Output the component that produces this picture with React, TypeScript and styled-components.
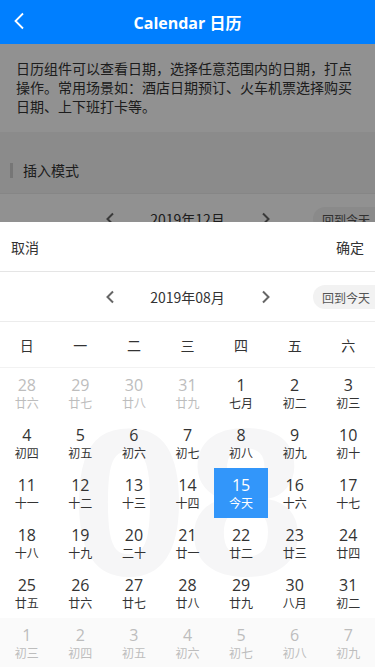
import React from "react";
import styled, { createGlobalStyle } from "styled-components";

const Global = createGlobalStyle`
  html, body { margin: 0; padding: 0; }
  body {
    font-family: "Open Sans", "Noto Sans CJK SC", sans-serif;
    background: #ffffff;
    color: #333;
    -webkit-font-smoothing: antialiased;
  }
  * { box-sizing: border-box; }
`;

const Page = styled.div`
  width: 375px;
  height: 667px;
  overflow: hidden;
  background: #fff;
`;

const NavBar = styled.header`
  height: 44px;
  background: #007fff;
  display: flex;
  align-items: center;
  justify-content: center;
  position: relative;
  z-index: 2;
`;

const BackBtn = styled.div`
  position: absolute;
  left: 13px;
  top: 12px;
  width: 12px;
  height: 18px;
  display: flex;
`;

const NavTitle = styled.h1`
  margin: 0;
  font-size: 16px;
  font-weight: 700;
  color: #fff;
  font-family: "Open Sans", "Noto Sans CJK SC", sans-serif;
`;

const Desc = styled.p`
  margin: 0;
  padding: 15px 16px 16px;
  font-size: 14px;
  line-height: 19px;
  color: #333;
  font-family: "Noto Sans CJK SC", sans-serif;
`;

const Section = styled.div`
  background: #f5f5f5;
  padding: 28px 10px 13px;
  border-bottom: 1px solid #ececec;
`;

const SectionTitle = styled.div`
  display: flex;
  align-items: center;
  gap: 10px;
  font-size: 14px;
  line-height: 20px;
  color: #333;
  font-family: "Noto Sans CJK SC", sans-serif;
  &::before {
    content: "";
    width: 3px;
    height: 15px;
    background: #cfcfcf;
  }
`;

const MonthBar = styled.div`
  height: 50px;
  display: flex;
  align-items: center;
  justify-content: center;
  gap: 33px;
  position: relative;
  border-bottom: 1px solid #ececec;
  background: #fff;
`;

const Chevron = styled.span`
  display: flex;
  width: 10px;
  height: 14px;
`;

const MonthTitle = styled.span`
  font-size: 14px;
  color: #333;
  width: 80px;
  text-align: center;
  font-family: "Noto Sans CJK SC", sans-serif;
`;

const TodayBtn = styled.span`
  position: absolute;
  right: 0;
  top: 13px;
  height: 24px;
  padding: 0 5px 0 9px;
  display: flex;
  align-items: center;
  background: #f2f2f2;
  border-radius: 12px 0 0 12px;
  font-size: 12px;
  color: #555;
  font-family: "Noto Sans CJK SC", sans-serif;
`;

const Mask = styled.div`
  position: fixed;
  left: 0;
  right: 0;
  top: 44px;
  bottom: 0;
  background: rgba(0, 0, 0, 0.43);
`;

const Popup = styled.div`
  position: fixed;
  left: 0;
  right: 0;
  bottom: 0;
  height: 445px;
  background: #fff;
  display: flex;
  flex-direction: column;
`;

const ActionBar = styled.div`
  height: 50px;
  padding: 0 11px;
  display: flex;
  align-items: center;
  justify-content: space-between;
  border-bottom: 1px solid #e5e5e5;
  font-size: 14px;
  color: #333;
  font-family: "Noto Sans CJK SC", sans-serif;
`;

const WeekRow = styled.div`
  height: 46px;
  display: grid;
  grid-template-columns: repeat(7, 1fr);
  align-items: center;
  border-bottom: 1px solid #f2f2f2;
  font-size: 14px;
  color: #333;
  text-align: center;
  font-family: "Noto Sans CJK SC", sans-serif;
`;

const Body = styled.div`
  position: relative;
  flex: 1;
  overflow: hidden;
`;

const Watermark = styled.div`
  position: absolute;
  left: 0;
  right: 0;
  top: 30px;
  text-align: center;
  font-family: "Liberation Sans", Arial, sans-serif;
  font-weight: 700;
  font-size: 210px;
  line-height: 210px;
  color: #f6f6f7;
  pointer-events: none;
`;

const Grid = styled.div`
  position: relative;
  display: grid;
  grid-template-columns: repeat(7, 1fr);
  grid-auto-rows: 50px;
`;

const Cell = styled.div<{ $muted?: boolean; $selected?: boolean; $shaded?: boolean }>`
  display: flex;
  flex-direction: column;
  align-items: center;
  justify-content: center;
  background: ${(p) => (p.$selected ? "#3296fa" : p.$shaded ? "#fafafa" : "transparent")};
  color: ${(p) => (p.$selected ? "#fff" : p.$muted ? "#bdbdbd" : "#333")};
`;

const DayNum = styled.span`
  display: block;
  height: 19px;
  font-size: 16px;
  line-height: 19px;
  font-family: "Open Sans", "Noto Sans CJK SC", sans-serif;
`;

const Lunar = styled.span`
  display: block;
  height: 16px;
  font-size: 12px;
  line-height: 16px;
  font-family: "Noto Sans CJK SC", sans-serif;
`;

const ChevronIcon = ({ dir }: { dir: "l" | "r" }) => (
  <svg width="10" height="14" viewBox="0 0 10 14">
    <polyline
      points={dir === "l" ? "8,1.5 2.5,7 8,12.5" : "2,1.5 7.5,7 2,12.5"}
      fill="none"
      stroke="#666"
      strokeWidth="2"
    />
  </svg>
);

type Day = { d: number; l: string; m?: boolean; s?: boolean };

const raw: [number, string][] = [
  [28, "廿六"], [29, "廿七"], [30, "廿八"], [31, "廿九"],
  [1, "七月"], [2, "初二"], [3, "初三"], [4, "初四"], [5, "初五"], [6, "初六"], [7, "初七"],
  [8, "初八"], [9, "初九"], [10, "初十"], [11, "十一"], [12, "十二"], [13, "十三"], [14, "十四"],
  [15, "今天"], [16, "十六"], [17, "十七"], [18, "十八"], [19, "十九"], [20, "二十"], [21, "廿一"],
  [22, "廿二"], [23, "廿三"], [24, "廿四"], [25, "廿五"], [26, "廿六"], [27, "廿七"], [28, "廿八"],
  [29, "廿九"], [30, "八月"], [31, "初二"],
  [1, "初三"], [2, "初四"], [3, "初五"], [4, "初六"], [5, "初七"], [6, "初八"], [7, "初九"],
];

const days: Day[] = raw.map(([d, l], i) => ({
  d,
  l,
  m: i < 4 || i >= 35,
  s: i === 18,
}));

const weeks = ["日", "一", "二", "三", "四", "五", "六"];

export default function App() {
  return (
    <Page>
      <Global />
      <NavBar>
        <BackBtn>
          <svg width="12" height="18" viewBox="0 0 12 18">
            <polyline points="10,1.5 2.5,9 10,16.5" fill="none" stroke="#fff" strokeWidth="1.8" />
          </svg>
        </BackBtn>
        <NavTitle>Calendar 日历</NavTitle>
      </NavBar>
      <Desc>
        日历组件可以查看日期，选择任意范围内的日期，打点操作。常用场景如：酒店日期预订、火车机票选择购买日期、上下班打卡等。
      </Desc>
      <Section>
        <SectionTitle>插入模式</SectionTitle>
      </Section>
      <MonthBar>
        <Chevron><ChevronIcon dir="l" /></Chevron>
        <MonthTitle>2019年12月</MonthTitle>
        <Chevron><ChevronIcon dir="r" /></Chevron>
        <TodayBtn>回到今天</TodayBtn>
      </MonthBar>

      <Mask />
      <Popup>
        <ActionBar>
          <span>取消</span>
          <span>确定</span>
        </ActionBar>
        <MonthBar>
          <Chevron><ChevronIcon dir="l" /></Chevron>
          <MonthTitle>2019年08月</MonthTitle>
          <Chevron><ChevronIcon dir="r" /></Chevron>
          <TodayBtn>回到今天</TodayBtn>
        </MonthBar>
        <WeekRow>
          {weeks.map((w) => (
            <span key={w}>{w}</span>
          ))}
        </WeekRow>
        <Body>
          <Watermark>08</Watermark>
          <Grid>
            {days.map((day, i) => (
              <Cell key={i} $muted={day.m} $selected={day.s} $shaded={i >= 35}>
                <DayNum>{day.d}</DayNum>
                <Lunar>{day.l}</Lunar>
              </Cell>
            ))}
          </Grid>
        </Body>
      </Popup>
    </Page>
  );
}
